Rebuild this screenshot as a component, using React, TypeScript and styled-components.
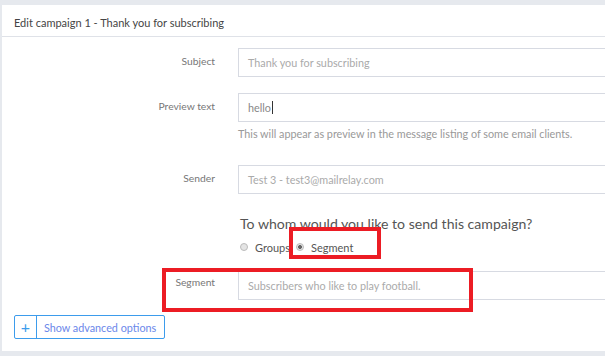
import React from "react";
import styled, { createGlobalStyle } from "styled-components";

const Global = createGlobalStyle`
  html, body { margin: 0; padding: 0; background: #e6e9ee; overflow: hidden; }
  body { font-family: Lato, "Open Sans", sans-serif; }
  * { box-sizing: border-box; }
`;

const Page = styled.div`
  width: 605px;
  height: 356px;
  padding: 5px 0 0 2px;
  position: relative;
  overflow: hidden;
`;

const Panel = styled.div`
  width: 700px;
  background: #fff;
  padding-bottom: 12px;
`;

const Header = styled.div`
  height: 32px;
  border-bottom: 1px solid #dfe2e8;
  padding: 4px 12px 0;
  display: flex;
  align-items: center;
  font-size: 11px;
  color: #444;
`;

const Body = styled.div`
  padding: 11px 0 0 12px;
`;

const Row = styled.div<{ $mb?: number }>`
  display: flex;
  align-items: flex-start;
  margin-bottom: ${(p) => p.$mb ?? 16}px;
`;

const Label = styled.div<{ $pt?: number }>`
  width: 201px;
  margin-right: 23px;
  text-align: right;
  font-size: 10.3px;
  color: #777;
  padding-top: ${(p) => p.$pt ?? 6}px;
  line-height: 14px;
`;

const Field = styled.div`
  flex: 1;
`;

const Input = styled.div<{ $value?: boolean }>`
  height: 29px;
  border: 1px solid #d7dae2;
  border-right: none;
  display: flex;
  align-items: center;
  padding-left: 9px;
  font-size: 10.8px;
  color: ${(p) => (p.$value ? "#888" : "#aaa")};
`;

const Caret = styled.span`
  display: inline-block;
  width: 1px;
  height: 13px;
  background: #333;
  margin-left: 1px;
`;

const Help = styled.div`
  margin-top: 5px;
  font-size: 10.8px;
  color: #999;
  line-height: 14px;
`;

const Question = styled.div`
  margin-left: 226px;
  font-size: 14.1px;
  color: #555;
  line-height: 20px;
  margin-bottom: 3px;
`;

const Radios = styled.div`
  margin-left: 226px;
  display: flex;
  align-items: center;
  height: 20px;
  margin-bottom: 14px;
  font-size: 11px;
  color: #555;
`;

const RadioItem = styled.label`
  display: flex;
  align-items: center;
  margin-right: 6px;
`;

const Dot = styled.span<{ $checked?: boolean }>`
  width: 8px;
  height: 8px;
  border-radius: 50%;
  border: 1px solid #bbb;
  background: ${(p) => (p.$checked ? "radial-gradient(circle, #666 0 1.8px, #e4e4e4 2.2px)" : "#e4e4e4")};
  margin: 0 7px 0 0;
`;

const Button = styled.div`
  display: inline-flex;
  height: 24px;
  border: 1px solid #3d9cec;
  border-radius: 2px;
  color: #3d9cec;
  font-size: 10.8px;
  align-items: stretch;
`;

const Plus = styled.span`
  width: 22px;
  display: flex;
  align-items: center;
  justify-content: center;
  border-right: 1px solid #3d9cec;
  font-size: 16px;
  padding-bottom: 1px;
`;

const BtnText = styled.span`
  display: flex;
  align-items: center;
  padding: 0 8px 0 7px;
  color: #6b87ea;
`;

const Mark = styled.div<{ $x: number; $y: number; $w: number; $h: number }>`
  position: absolute;
  left: ${(p) => p.$x}px;
  top: ${(p) => p.$y}px;
  width: ${(p) => p.$w}px;
  height: ${(p) => p.$h}px;
  border: 4px solid #ec1c24;
  pointer-events: none;
`;

export default function App() {
  return (
    <>
      <Global />
      <Page>
        <Panel>
          <Header>Edit campaign 1 - Thank you for subscribing</Header>
          <Body>
            <Row>
              <Label>Subject</Label>
              <Field>
                <Input>Thank you for subscribing</Input>
              </Field>
            </Row>
            <Row $mb={24}>
              <Label>Preview text</Label>
              <Field>
                <Input $value>
                  hello<Caret />
                </Input>
                <Help>This will appear as preview in the message listing of some email clients.</Help>
              </Field>
            </Row>
            <Row $mb={20}>
              <Label>Sender</Label>
              <Field>
                <Input>Test 3 - test3@mailrelay.com</Input>
              </Field>
            </Row>
            <Question>To whom would you like to send this campaign?</Question>
            <Radios>
              <RadioItem>
                <Dot />
                Groups
              </RadioItem>
              <RadioItem>
                <Dot $checked />
                Segment
              </RadioItem>
            </Radios>
            <Row $mb={15}>
              <Label $pt={4}>Segment</Label>
              <Field>
                <Input>Subscribers who like to play football.</Input>
              </Field>
            </Row>
            <Button>
              <Plus>+</Plus>
              <BtnText>Show advanced options</BtnText>
            </Button>
          </Body>
        </Panel>
        <Mark $x={289} $y={227} $w={92} $h={32} />
        <Mark $x={162} $y={268} $w={311} $h={44} />
      </Page>
    </>
  );
}
